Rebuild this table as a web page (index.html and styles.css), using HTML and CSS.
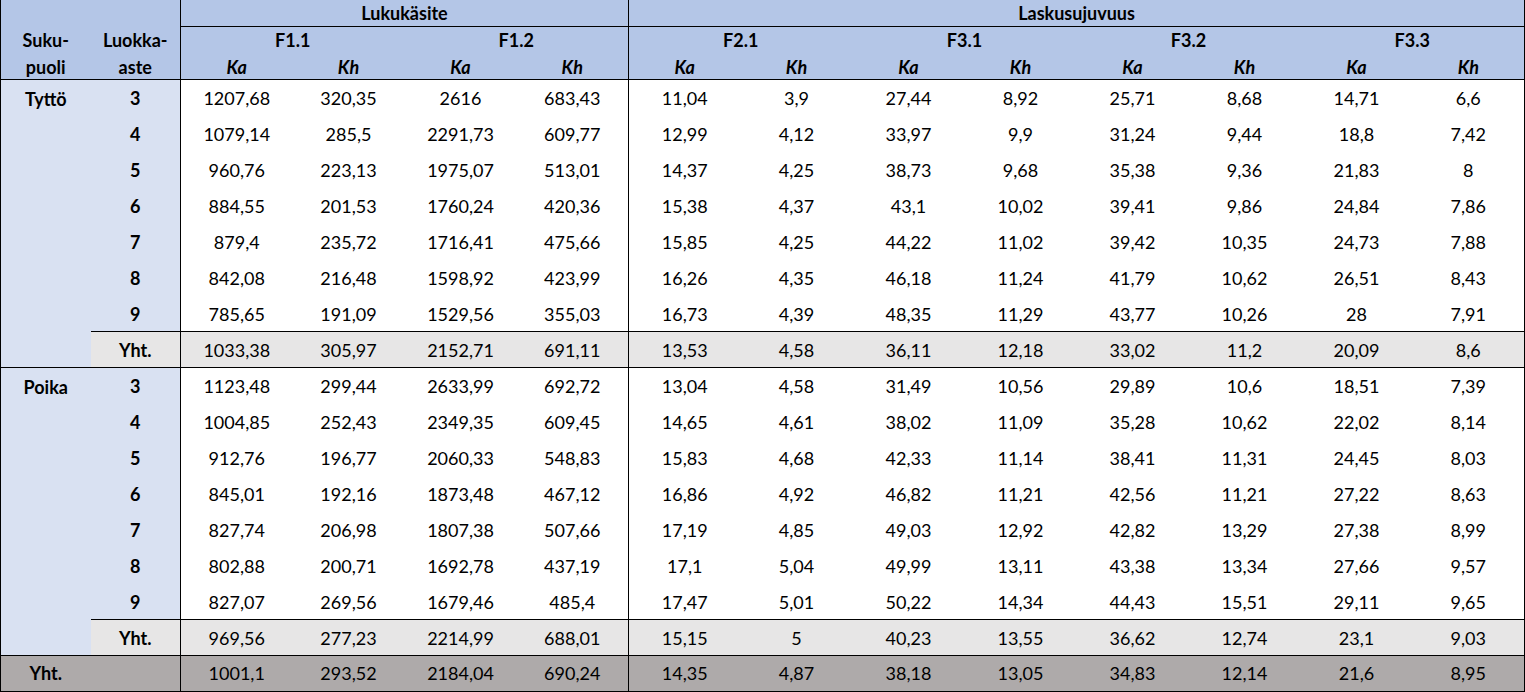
FILE: index.html
```html
<!DOCTYPE html>
<html lang="fi">
<head>
<meta charset="utf-8">
<title>Taulukko</title>
<link rel="stylesheet" href="styles.css">
</head>
<body>
<table class="stats">
  <colgroup>
    <col class="c-lbl"><col class="c-lbl">
    <col class="c-num"><col class="c-num"><col class="c-num"><col class="c-num">
    <col class="c-num"><col class="c-num"><col class="c-num"><col class="c-num">
    <col class="c-num"><col class="c-num"><col class="c-num"><col class="c-num">
  </colgroup>
  <thead>
    <tr class="h1">
      <th colspan="2"></th>
      <th colspan="4" class="g1 area">Lukukäsite</th>
      <th colspan="8" class="g2 area">Laskusujuvuus</th>
    </tr>
    <tr class="h2">
      <th>Suku-</th><th>Luokka-</th>
      <th colspan="2" class="g1">F1.1</th><th colspan="2">F1.2</th>
      <th colspan="2" class="g2">F2.1</th><th colspan="2">F3.1</th><th colspan="2">F3.2</th><th colspan="2">F3.3</th>
    </tr>
    <tr class="h3">
      <th>puoli</th><th>aste</th>
      <th class="g1 it">Ka</th><th class="it">Kh</th><th class="it">Ka</th><th class="it">Kh</th>
      <th class="g2 it">Ka</th><th class="it">Kh</th><th class="it">Ka</th><th class="it">Kh</th>
      <th class="it">Ka</th><th class="it">Kh</th><th class="it">Ka</th><th class="it">Kh</th>
    </tr>
  </thead>
  <tbody>
    <tr><th rowspan="8" class="sex">Tyttö</th><th class="grade">3</th><td class="g1">1207,68</td><td>320,35</td><td>2616</td><td>683,43</td><td class="g2">11,04</td><td>3,9</td><td>27,44</td><td>8,92</td><td>25,71</td><td>8,68</td><td>14,71</td><td>6,6</td></tr>
    <tr><th class="grade">4</th><td class="g1">1079,14</td><td>285,5</td><td>2291,73</td><td>609,77</td><td class="g2">12,99</td><td>4,12</td><td>33,97</td><td>9,9</td><td>31,24</td><td>9,44</td><td>18,8</td><td>7,42</td></tr>
    <tr><th class="grade">5</th><td class="g1">960,76</td><td>223,13</td><td>1975,07</td><td>513,01</td><td class="g2">14,37</td><td>4,25</td><td>38,73</td><td>9,68</td><td>35,38</td><td>9,36</td><td>21,83</td><td>8</td></tr>
    <tr><th class="grade">6</th><td class="g1">884,55</td><td>201,53</td><td>1760,24</td><td>420,36</td><td class="g2">15,38</td><td>4,37</td><td>43,1</td><td>10,02</td><td>39,41</td><td>9,86</td><td>24,84</td><td>7,86</td></tr>
    <tr><th class="grade">7</th><td class="g1">879,4</td><td>235,72</td><td>1716,41</td><td>475,66</td><td class="g2">15,85</td><td>4,25</td><td>44,22</td><td>11,02</td><td>39,42</td><td>10,35</td><td>24,73</td><td>7,88</td></tr>
    <tr><th class="grade">8</th><td class="g1">842,08</td><td>216,48</td><td>1598,92</td><td>423,99</td><td class="g2">16,26</td><td>4,35</td><td>46,18</td><td>11,24</td><td>41,79</td><td>10,62</td><td>26,51</td><td>8,43</td></tr>
    <tr><th class="grade">9</th><td class="g1">785,65</td><td>191,09</td><td>1529,56</td><td>355,03</td><td class="g2">16,73</td><td>4,39</td><td>48,35</td><td>11,29</td><td>43,77</td><td>10,26</td><td>28</td><td>7,91</td></tr>
    <tr class="sub"><th class="grade">Yht.</th><td class="g1">1033,38</td><td>305,97</td><td>2152,71</td><td>691,11</td><td class="g2">13,53</td><td>4,58</td><td>36,11</td><td>12,18</td><td>33,02</td><td>11,2</td><td>20,09</td><td>8,6</td></tr>

    <tr class="grp-start"><th rowspan="8" class="sex">Poika</th><th class="grade">3</th><td class="g1">1123,48</td><td>299,44</td><td>2633,99</td><td>692,72</td><td class="g2">13,04</td><td>4,58</td><td>31,49</td><td>10,56</td><td>29,89</td><td>10,6</td><td>18,51</td><td>7,39</td></tr>
    <tr><th class="grade">4</th><td class="g1">1004,85</td><td>252,43</td><td>2349,35</td><td>609,45</td><td class="g2">14,65</td><td>4,61</td><td>38,02</td><td>11,09</td><td>35,28</td><td>10,62</td><td>22,02</td><td>8,14</td></tr>
    <tr><th class="grade">5</th><td class="g1">912,76</td><td>196,77</td><td>2060,33</td><td>548,83</td><td class="g2">15,83</td><td>4,68</td><td>42,33</td><td>11,14</td><td>38,41</td><td>11,31</td><td>24,45</td><td>8,03</td></tr>
    <tr><th class="grade">6</th><td class="g1">845,01</td><td>192,16</td><td>1873,48</td><td>467,12</td><td class="g2">16,86</td><td>4,92</td><td>46,82</td><td>11,21</td><td>42,56</td><td>11,21</td><td>27,22</td><td>8,63</td></tr>
    <tr><th class="grade">7</th><td class="g1">827,74</td><td>206,98</td><td>1807,38</td><td>507,66</td><td class="g2">17,19</td><td>4,85</td><td>49,03</td><td>12,92</td><td>42,82</td><td>13,29</td><td>27,38</td><td>8,99</td></tr>
    <tr><th class="grade">8</th><td class="g1">802,88</td><td>200,71</td><td>1692,78</td><td>437,19</td><td class="g2">17,1</td><td>5,04</td><td>49,99</td><td>13,11</td><td>43,38</td><td>13,34</td><td>27,66</td><td>9,57</td></tr>
    <tr><th class="grade">9</th><td class="g1">827,07</td><td>269,56</td><td>1679,46</td><td>485,4</td><td class="g2">17,47</td><td>5,01</td><td>50,22</td><td>14,34</td><td>44,43</td><td>15,51</td><td>29,11</td><td>9,65</td></tr>
    <tr class="sub"><th class="grade">Yht.</th><td class="g1">969,56</td><td>277,23</td><td>2214,99</td><td>688,01</td><td class="g2">15,15</td><td>5</td><td>40,23</td><td>13,55</td><td>36,62</td><td>12,74</td><td>23,1</td><td>9,03</td></tr>
  </tbody>
  <tfoot>
    <tr class="total"><th class="sex-tot">Yht.</th><th></th><td class="g1">1001,1</td><td>293,52</td><td>2184,04</td><td>690,24</td><td class="g2">14,35</td><td>4,87</td><td>38,18</td><td>13,05</td><td>34,83</td><td>12,14</td><td>21,6</td><td>8,95</td></tr>
  </tfoot>
</table>
</body>
</html>
```
FILE: styles.css
```css
html, body {
  margin: 0;
  padding: 0;
  background: #ffffff;
}

.stats {
  border-collapse: collapse;
  table-layout: fixed;
  width: 1525px;
  font-family: Lato, "Liberation Sans", sans-serif;
  font-size: 18px;
  color: #000;
  border-left: 1px solid #000;
  border-right: 1px solid #000;
  border-bottom: 1px solid #000;
}

.c-lbl { width: 90px; }
.c-num { width: 112px; }

.stats th,
.stats td {
  padding: 0;
  text-align: center;
  vertical-align: middle;
  white-space: nowrap;
}

.stats th { font-weight: 700; }

.stats thead th {
  background: #b4c6e7;
}

.stats thead tr.h1 { height: 26px; }
.stats thead tr.h2 { height: 27px; }
.stats thead tr.h3 { height: 26px; }

.stats thead tr.h1 th { line-height: 22px; vertical-align: top; padding-top: 2px; }
.stats thead tr.h2 th { line-height: 22px; vertical-align: middle; padding-top: 0; }
.stats thead tr.h3 th { line-height: 22px; vertical-align: middle; padding-top: 2px; border-bottom: 1px solid #000; }

.stats thead .area { border-bottom: 1px solid #000; }

.it { font-style: italic; }

.g1 { border-left: 1px solid #000; }
.g2 { border-left: 1px solid #000; }

.stats tbody tr,
.stats tfoot tr { height: 36px; }

.stats tbody td,
.stats tbody th { padding-top: 2px; line-height: 22px; }

.stats tfoot td,
.stats tfoot th { padding-top: 0; line-height: 22px; }

.stats tbody td { font-weight: 400; }

.sex {
  background: #d9e1f2;
  vertical-align: top !important;
  line-height: 34px !important;
  text-align: center;
}

.grade { background: #d9e1f2; }

.sub th,
.sub td {
  background: #e7e6e6;
  border-top: 1px solid #000;
}

.grp-start th,
.grp-start td { border-top: 1px solid #000; }

.total th,
.total td {
  background: #aeaaaa;
  border-top: 1px solid #000;
}
```
